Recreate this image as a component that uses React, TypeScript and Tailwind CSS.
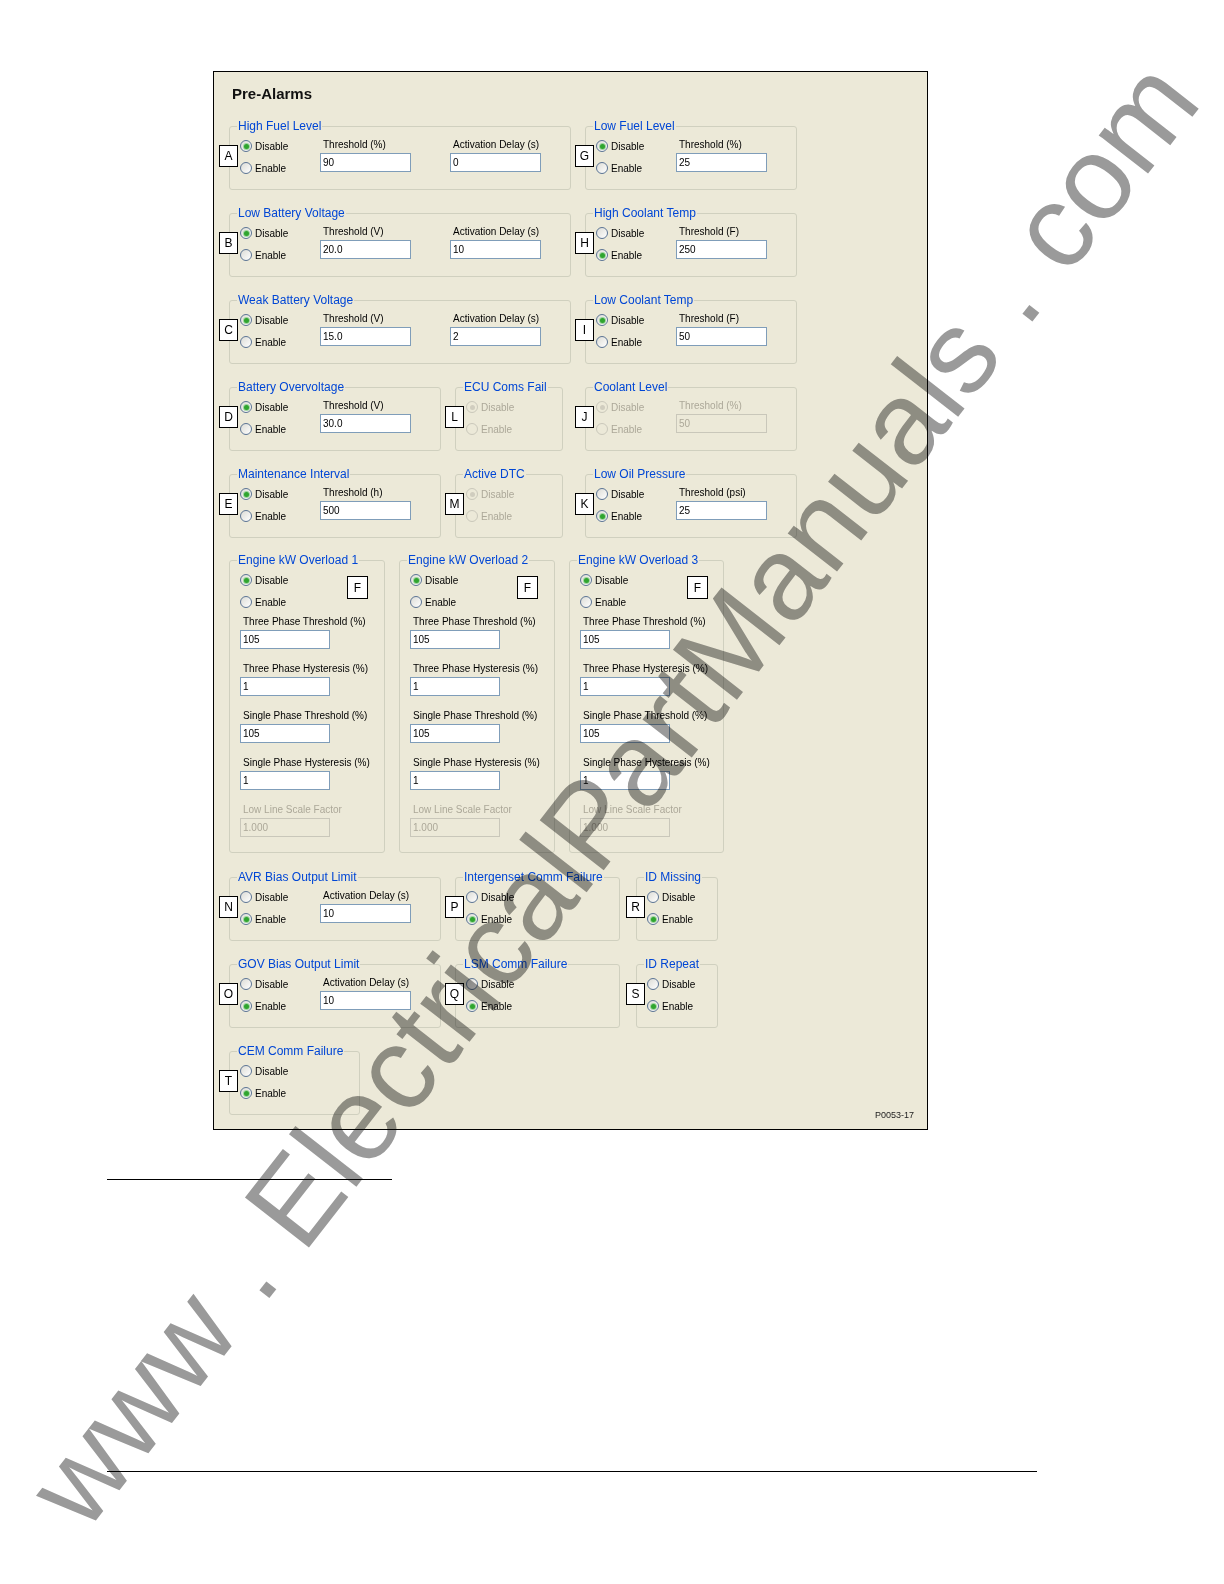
import React from "react";

type RadioProps = { checked?: boolean; disabled?: boolean; label: string };

function Radio({ checked, disabled, label }: RadioProps) {
  return (
    <div className="flex h-[22px] items-center gap-[3px]">
      <span
        className={
          disabled
            ? "flex h-[12px] w-[12px] items-center justify-center rounded-full border border-[#CAC8BB] bg-[#ECE9D8]"
            : "flex h-[12px] w-[12px] items-center justify-center rounded-full border border-[#5B7494] bg-gradient-to-br from-[#DCDCD6] to-white"
        }
      >
        {checked ? (
          <span
            className={
              disabled
                ? "h-[5px] w-[5px] rounded-full bg-[#D0CDBF]"
                : "h-[5px] w-[5px] rounded-full bg-[#2FA52F] ring-1 ring-[#9ED49E]"
            }
          />
        ) : null}
      </span>
      <span className={disabled ? "text-[#ACA899]" : "text-black"}>{label}</span>
    </div>
  );
}

function Radios({ enabled, disabled }: { enabled?: boolean; disabled?: boolean }) {
  return (
    <div className="flex flex-col">
      <Radio label="Disable" checked={!enabled} disabled={disabled} />
      <Radio label="Enable" checked={!!enabled} disabled={disabled} />
    </div>
  );
}

function Field({
  label,
  value,
  disabled,
  narrow,
}: {
  label: string;
  value: string;
  disabled?: boolean;
  narrow?: boolean;
}) {
  return (
    <div className="flex flex-col">
      <span className={disabled ? "ml-[3px] h-[12px] leading-[12px] text-[#ACA899]" : "ml-[3px] h-[12px] leading-[12px] text-black"}>
        {label}
      </span>
      <div
        className={
          (narrow ? "w-[90px] " : "w-[91px] ") +
          (disabled
            ? "mt-[2px] h-[19px] border border-[#C9C7BA] bg-[#ECE9D8] pl-[2px] leading-[17px] text-[#ACA899]"
            : "mt-[2px] h-[19px] border border-[#7F9DB9] bg-white pl-[2px] leading-[17px] text-black")
        }
      >
        {value}
      </div>
    </div>
  );
}

function Badge({ letter }: { letter: string }) {
  return (
    <div className="absolute -left-[11px] top-[18px] z-[1] flex h-[22px] w-[19px] items-center justify-center border border-black bg-white text-[12px] leading-none text-black">
      {letter}
    </div>
  );
}

function Group({
  title,
  size,
  badge,
  children,
}: {
  title: string;
  size: string;
  badge?: string;
  children?: React.ReactNode;
}) {
  return (
    <div className={"relative shrink-0 rounded-[3px] border border-[#D0D0BF] " + size}>
      <div className="absolute -top-[8px] left-[7px] h-[14px] bg-[#ECE9D8] px-[1px] text-[12px] leading-[14px] text-[#0046D5]">
        {title}
      </div>
      {badge ? <Badge letter={badge} /> : null}
      {children}
    </div>
  );
}

function Std({
  title,
  badge,
  enabled,
  th,
  thv,
  delay,
  size = "w-[342px] h-[64px]",
  disabled,
}: {
  title: string;
  badge: string;
  enabled?: boolean;
  th?: string;
  thv?: string;
  delay?: string;
  size?: string;
  disabled?: boolean;
}) {
  return (
    <Group title={title} size={size} badge={badge}>
      <div className="flex pl-[10px] pt-[8px]">
        <div className="w-[80px] shrink-0">
          <Radios enabled={enabled} disabled={disabled} />
        </div>
        {th ? (
          <div className="mt-[4px]">
            <Field label={th} value={thv || ""} disabled={disabled} />
          </div>
        ) : null}
        {delay !== undefined ? (
          <div className={th ? "ml-[39px] mt-[4px]" : "mt-[4px]"}>
            <Field label="Activation Delay (s)" value={delay} />
          </div>
        ) : null}
      </div>
    </Group>
  );
}

function Overload({ n }: { n: number }) {
  return (
    <Group title={"Engine kW Overload " + n} size={n === 3 ? "w-[155px] h-[293px]" : "w-[156px] h-[293px]"}>
      <div className="absolute left-[117px] top-[15px] flex h-[23px] w-[21px] items-center justify-center border border-black bg-white text-[12px] leading-none text-black">
        F
      </div>
      <div className="flex flex-col pl-[10px] pt-[8px]">
        <Radios />
        <div className="mt-[3px] flex flex-col gap-[14px]">
          <Field narrow label="Three Phase Threshold (%)" value="105" />
          <Field narrow label="Three Phase Hysteresis (%)" value="1" />
          <Field narrow label="Single Phase Threshold (%)" value="105" />
          <Field narrow label="Single Phase Hysteresis (%)" value="1" />
          <Field narrow label="Low Line Scale Factor" value="1.000" disabled />
        </div>
      </div>
    </Group>
  );
}

function Simple({
  title,
  badge,
  size,
  enabled,
  disabled,
}: {
  title: string;
  badge: string;
  size: string;
  enabled?: boolean;
  disabled?: boolean;
}) {
  return (
    <Group title={title} size={size} badge={badge}>
      <div className="pl-[10px] pt-[8px]">
        <Radios enabled={enabled} disabled={disabled} />
      </div>
    </Group>
  );
}

export default function App() {
  return (
    <div className="relative h-[1584px] w-[1224px] overflow-hidden bg-white font-['Liberation_Sans',Arial,sans-serif] text-[10px]">
      <div className="ml-[213px] mt-[71px] flex h-[1059px] w-[715px] flex-col border border-black bg-[#ECE9D8] pl-[15px] pt-[13px]">
        <div className="ml-[3px] h-[18px] text-[15px] font-bold leading-[18px] text-[#111]">Pre-Alarms</div>

        <div className="mt-[23px] flex flex-col gap-[23px]">
          <div className="flex gap-[14px]">
            <Std title="High Fuel Level" badge="A" th="Threshold (%)" thv="90" delay="0" />
            <Std title="Low Fuel Level" badge="G" th="Threshold (%)" thv="25" size="w-[212px] h-[64px]" />
          </div>
          <div className="flex gap-[14px]">
            <Std title="Low Battery Voltage" badge="B" th="Threshold (V)" thv="20.0" delay="10" />
            <Std title="High Coolant Temp" badge="H" enabled th="Threshold (F)" thv="250" size="w-[212px] h-[64px]" />
          </div>
          <div className="flex gap-[14px]">
            <Std title="Weak Battery Voltage" badge="C" th="Threshold (V)" thv="15.0" delay="2" />
            <Std title="Low Coolant Temp" badge="I" th="Threshold (F)" thv="50" size="w-[212px] h-[64px]" />
          </div>
          <div className="flex">
            <Std title="Battery Overvoltage" badge="D" th="Threshold (V)" thv="30.0" size="w-[212px] h-[64px]" />
            <div className="ml-[14px]">
              <Simple title="ECU Coms Fail" badge="L" size="w-[108px] h-[64px]" disabled />
            </div>
            <div className="ml-[22px]">
              <Std title="Coolant Level" badge="J" th="Threshold (%)" thv="50" disabled size="w-[212px] h-[64px]" />
            </div>
          </div>
          <div className="flex">
            <Std title="Maintenance Interval" badge="E" th="Threshold (h)" thv="500" size="w-[212px] h-[64px]" />
            <div className="ml-[14px]">
              <Simple title="Active DTC" badge="M" size="w-[108px] h-[64px]" disabled />
            </div>
            <div className="ml-[22px]">
              <Std title="Low Oil Pressure" badge="K" enabled th="Threshold (psi)" thv="25" size="w-[212px] h-[64px]" />
            </div>
          </div>
          <div className="-mt-px flex gap-[14px]">
            <Overload n={1} />
            <Overload n={2} />
            <Overload n={3} />
          </div>
        </div>

        <div className="mt-[24px] flex flex-col gap-[23px]">
          <div className="flex">
            <Std title="AVR Bias Output Limit" badge="N" enabled delay="10" size="w-[212px] h-[64px]" />
            <div className="ml-[14px]">
              <Simple title="Intergenset Comm Failure" badge="P" size="w-[165px] h-[64px]" enabled />
            </div>
            <div className="ml-[16px]">
              <Simple title="ID Missing" badge="R" size="w-[82px] h-[64px]" enabled />
            </div>
          </div>
          <div className="flex">
            <Std title="GOV Bias Output Limit" badge="O" enabled delay="10" size="w-[212px] h-[64px]" />
            <div className="ml-[14px]">
              <Simple title="LSM Comm Failure" badge="Q" size="w-[165px] h-[64px]" enabled />
            </div>
            <div className="ml-[16px]">
              <Simple title="ID Repeat" badge="S" size="w-[82px] h-[64px]" enabled />
            </div>
          </div>
          <div className="flex">
            <Simple title="CEM Comm Failure" badge="T" size="w-[131px] h-[64px]" enabled />
          </div>
        </div>

        <div className="-mt-[5px] flex justify-end pr-[13px]">
          <span className="text-[9px] leading-[10px] text-[#222]">P0053-17</span>
        </div>
      </div>

      <div className="ml-[107px] mt-[49px] h-px w-[285px] bg-black" />
      <div className="ml-[107px] mt-[291px] h-px w-[930px] bg-black" />

      <div className="pointer-events-none absolute left-[612px] top-[793px] z-10 -translate-x-1/2 -translate-y-1/2 rotate-[-52deg] whitespace-nowrap text-[118px] leading-none text-[#9a9a9a] mix-blend-multiply">
        www . ElectricalPartManuals . com
      </div>
    </div>
  );
}
